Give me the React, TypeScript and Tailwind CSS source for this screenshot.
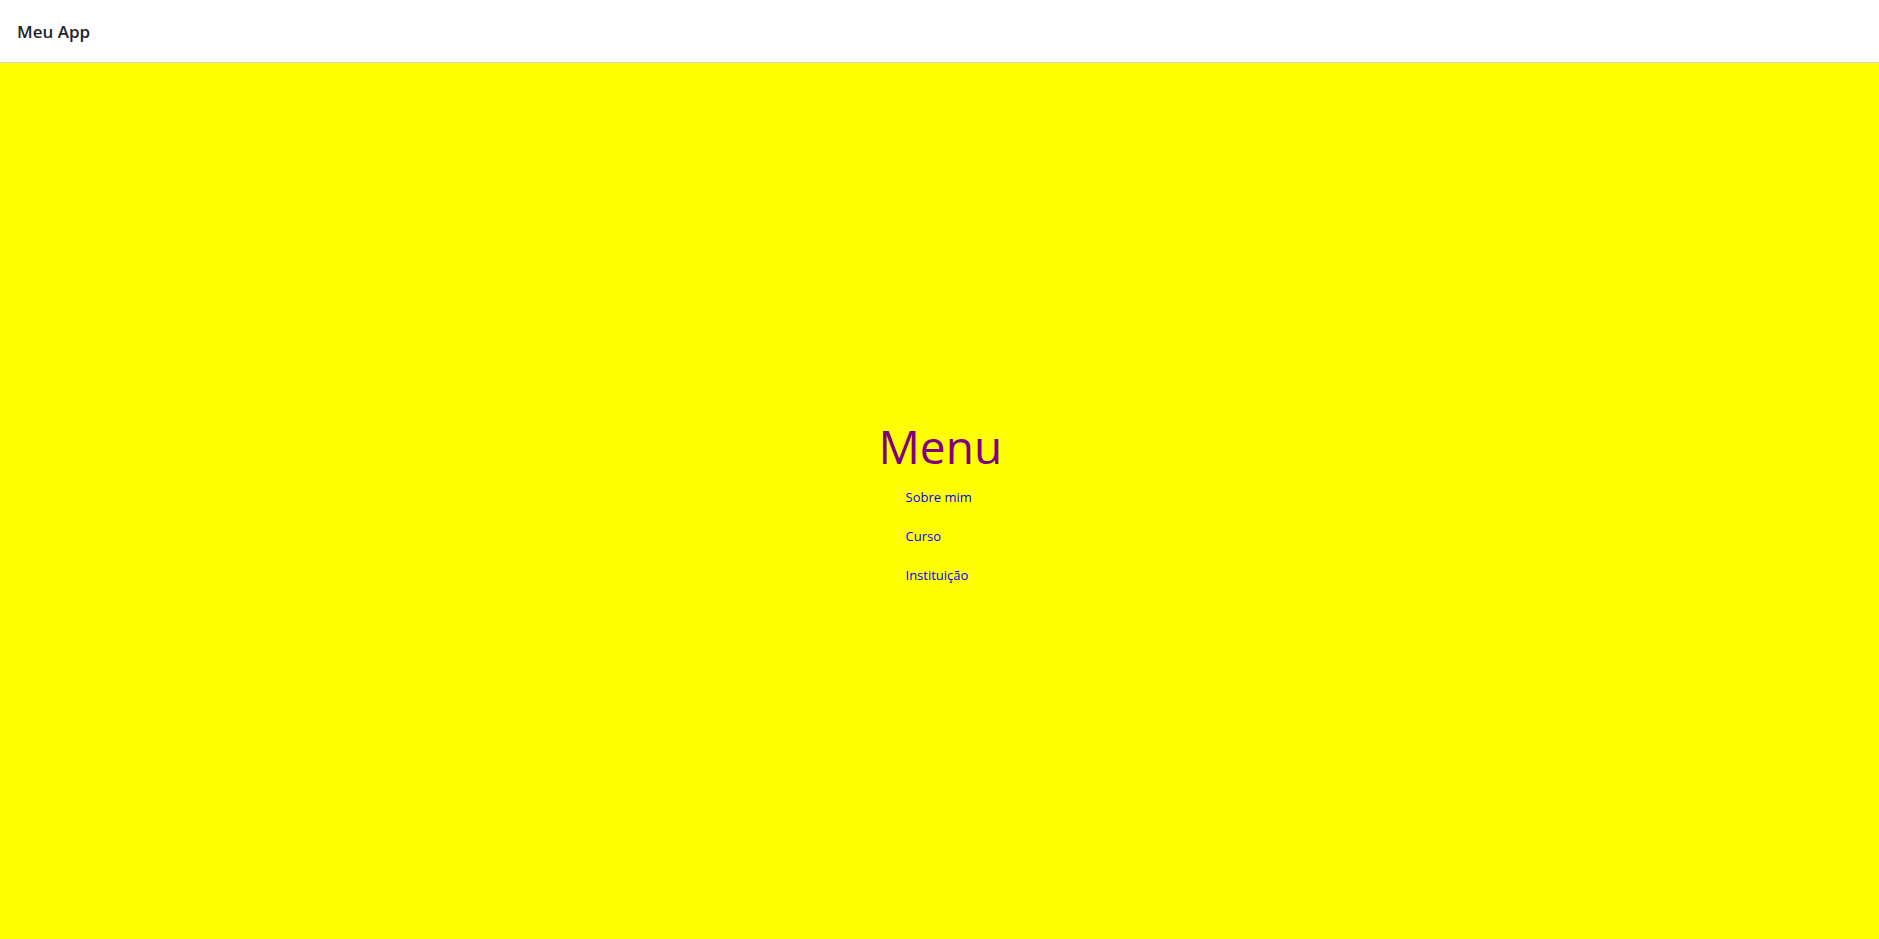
export default function App() {
    return (
        <div className="min-h-screen flex flex-col font-['Open_Sans',sans-serif]">
            {/* cabeçalho */}
            <header className="h-[63px] bg-white border-b border-[#d4d4d4] flex items-center px-[17px]">
                <span className="text-[17px] font-semibold text-[#212529] translate-y-[1px]">Meu App</span>
            </header>

            {/* conteúdo */}
            <main className="flex-1 bg-[#ffff00] flex items-center justify-center">
                <div className="flex flex-col w-[122px] mt-[8px]">
                    <h1 className="text-[46px] leading-[60px] text-[#800080] text-center whitespace-nowrap">Menu</h1>
                    <ul className="pl-[27px] pt-[2px] text-[13px] text-[#0000ff]">
                        <li className="leading-[39px]"><a href="#">Sobre mim</a></li>
                        <li className="leading-[39px]"><a href="#">Curso</a></li>
                        <li className="leading-[39px]"><a href="#">Instituição</a></li>
                    </ul>
                </div>
            </main>
        </div>
    );
}
